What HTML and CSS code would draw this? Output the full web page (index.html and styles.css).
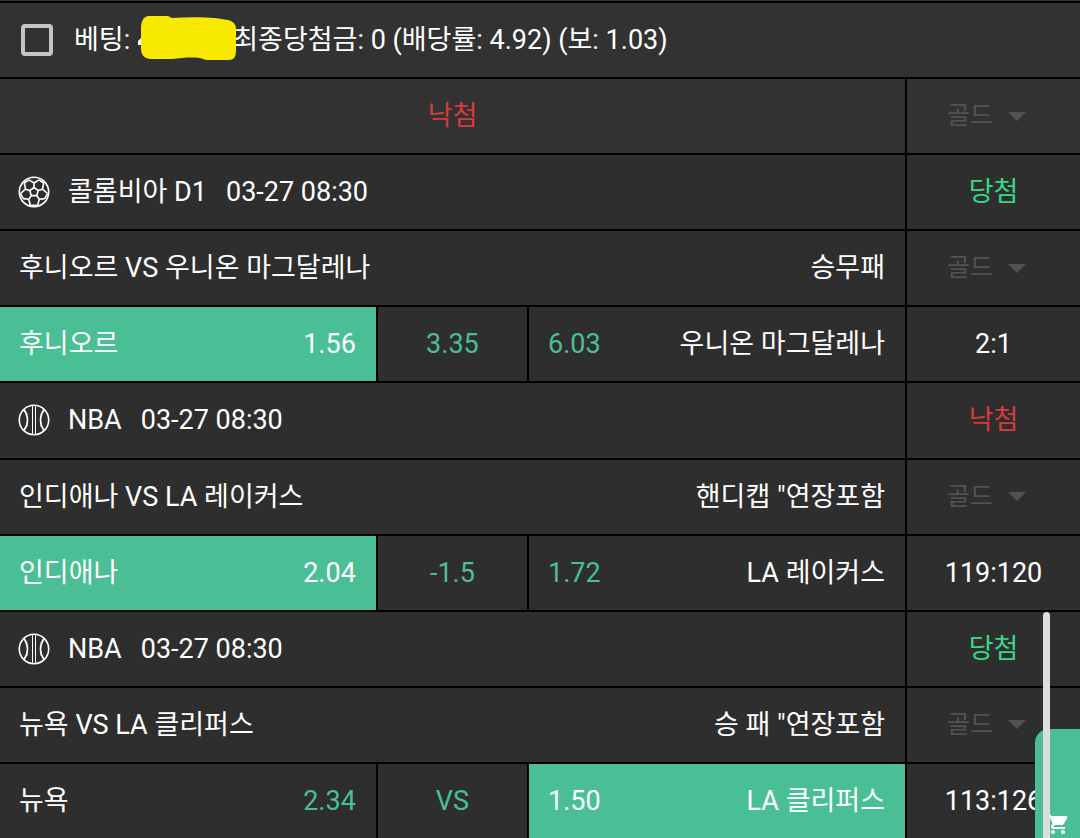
FILE: index.html
```html
<!DOCTYPE html>
<html lang="ko">
<head>
    <meta charset="UTF-8">
    <meta name="viewport" content="width=device-width, initial-scale=1.0">
    <title>베팅 내역</title>
    <link rel="stylesheet" href="styles.css">
</head>
<body>
    <!-- Shared icons -->
    <svg class="sprite" aria-hidden="true">
        <symbol id="icon-soccer" viewBox="0 0 32 32">
            <g fill="none" stroke="#fff" stroke-width="1.6" stroke-linejoin="round">
                <circle cx="16" cy="16" r="14.7"/>
                <path d="M16 11.5l4.3 3.1-1.6 5h-5.4l-1.6-5z"/>
                <path d="M16 11.5V7M20.3 14.6l4.2-1.4M18.7 19.6l2.6 3.6M13.3 19.6l-2.6 3.6M11.7 14.6l-4.2-1.4"/>
                <path d="M16 7l-5-3.200M16 7l5-3.200M24.500 13.200L25.700 7M24.500 13.200l5 4.300M21.300 23.200l5.500-.600M21.300 23.200l-1.800 6.500M10.700 23.200l1.800 6.500M10.700 23.200l-5.500-.600M7.500 13.200l-5 4.300M7.500 13.200L6.300 7"/>
                <path d="M11 3.800L6.300 7M21 3.800L25.700 7M29.500 17.500l-2.700 5.100M12.500 29.200h7M2.500 17.500l2.700 5.100"/>
            </g>
        </symbol>
        <symbol id="icon-ball" viewBox="0 0 32 32">
            <g fill="none" stroke="#fff" stroke-width="1.6">
                <circle cx="16" cy="16" r="14.7"/>
                <path d="M14.500 1.500v29M17.500 1.500v29" stroke-width="1"/>
                <path d="M6 5.500C8.500 9 9.500 12.500 9.500 16S8.500 23 6 26.500M26 5.500C23.500 9 22.500 12.500 22.500 16s1 7 3.500 10.500"/>
                <path d="M7.500 11l2-1M8 21l2 1M24.500 11l-2-1M24 21l-2 1" stroke-width="1"/>
            </g>
        </symbol>
        <symbol id="icon-arrow" viewBox="0 0 18 9">
            <path d="M0 0h18L9 9z" fill="#525252"/>
        </symbol>
    </svg>

    <table class="bets">
        <colgroup>
            <col class="col-home">
            <col class="col-draw">
            <col class="col-away">
            <col class="col-result">
        </colgroup>
        <tbody class="summary">
            <tr>
                <td colspan="4">
                    <div class="line">
                        <input type="checkbox" id="bet" class="check">
                        <label for="bet" class="bet-label">
                            <span>베팅:</span>
                            <svg class="marker" viewBox="0 0 100 46" aria-hidden="true">
                                <path d="M1 26l4-4v8H1z" fill="#fff"/>
                                <path d="M11 1h20l4 2c14-1 30-1 43 0l13 2q8 2 8 9v22q0 9-7 9H69l-6-2c-10-1-18 0-28 1H13q-9-1-9-10V11Q5 2 11 1z" fill="#f7ea00"/>
                            </svg>
                            <span>최종당첨금: 0 (배당률: 4.92) (보: 1.03)</span>
                        </label>
                    </div>
                </td>
            </tr>
            <tr>
                <td colspan="3" class="center lose">낙첨</td>
                <td>
                    <div class="gold">
                        <select aria-label="골드" disabled><option>골드</option></select>
                        <svg class="arrow"><use href="#icon-arrow"/></svg>
                    </div>
                </td>
            </tr>
        </tbody>

        <!-- Colombia D1 -->
        <tbody>
            <tr>
                <td colspan="3">
                    <div class="line league">
                        <svg class="sport"><use href="#icon-soccer"/></svg>
                        <span>콜롬비아 D1</span>
                        <span>03-27 08:30</span>
                    </div>
                </td>
                <td class="center win">당첨</td>
            </tr>
            <tr>
                <td colspan="3">
                    <div class="line between"><span>후니오르 VS 우니온 마그달레나</span><span>승무패</span></div>
                </td>
                <td>
                    <div class="gold">
                        <select aria-label="골드" disabled><option>골드</option></select>
                        <svg class="arrow"><use href="#icon-arrow"/></svg>
                    </div>
                </td>
            </tr>
            <tr>
                <td class="picked"><div class="line between"><span>후니오르</span><span class="odd">1.56</span></div></td>
                <td class="center odd">3.35</td>
                <td><div class="line between"><span class="odd">6.03</span><span>우니온 마그달레나</span></div></td>
                <td class="center">2:1</td>
            </tr>
        </tbody>

        <!-- NBA: Indiana - LA Lakers -->
        <tbody>
            <tr>
                <td colspan="3">
                    <div class="line league">
                        <svg class="sport"><use href="#icon-ball"/></svg>
                        <span>NBA</span>
                        <span>03-27 08:30</span>
                    </div>
                </td>
                <td class="center lose">낙첨</td>
            </tr>
            <tr>
                <td colspan="3">
                    <div class="line between"><span>인디애나 VS LA 레이커스</span><span>핸디캡 "연장포함</span></div>
                </td>
                <td>
                    <div class="gold">
                        <select aria-label="골드" disabled><option>골드</option></select>
                        <svg class="arrow"><use href="#icon-arrow"/></svg>
                    </div>
                </td>
            </tr>
            <tr>
                <td class="picked"><div class="line between"><span>인디애나</span><span class="odd">2.04</span></div></td>
                <td class="center odd">-1.5</td>
                <td><div class="line between"><span class="odd">1.72</span><span>LA 레이커스</span></div></td>
                <td class="center">119:120</td>
            </tr>
        </tbody>

        <!-- NBA: New York - LA Clippers -->
        <tbody>
            <tr>
                <td colspan="3">
                    <div class="line league">
                        <svg class="sport"><use href="#icon-ball"/></svg>
                        <span>NBA</span>
                        <span>03-27 08:30</span>
                    </div>
                </td>
                <td class="center win">당첨</td>
            </tr>
            <tr>
                <td colspan="3">
                    <div class="line between"><span>뉴욕 VS LA 클리퍼스</span><span>승 패 "연장포함</span></div>
                </td>
                <td>
                    <div class="gold">
                        <select aria-label="골드" disabled><option>골드</option></select>
                        <svg class="arrow"><use href="#icon-arrow"/></svg>
                    </div>
                </td>
            </tr>
            <tr>
                <td><div class="line between"><span>뉴욕</span><span class="odd">2.34</span></div></td>
                <td class="center odd">VS</td>
                <td class="picked"><div class="line between"><span class="odd">1.50</span><span>LA 클리퍼스</span></div></td>
                <td class="center">113:126</td>
            </tr>
        </tbody>
    </table>

    <button type="button" class="cart" aria-label="장바구니">
        <svg viewBox="0 0 24 24" width="24" height="24" fill="#fff">
            <path d="M7 18c-1.100 0-2 .900-2 2s.900 2 2 2 2-.900 2-2-.900-2-2-2zM1 2v2h2l3.600 7.600-1.350 2.450C4.500 15.400 5.500 17 7 17h12v-2H7.400l1.150-2h7.450c.750 0 1.400-.400 1.750-1.030L21.300 5.500C21.700 4.800 21.200 4 20.400 4H5.200l-.940-2zM17 18c-1.100 0-2 .900-2 2s.900 2 2 2 2-.900 2-2-.900-2-2-2z"/>
        </svg>
    </button>
    <div class="scroll-thumb"></div>
</body>
</html>
```
FILE: styles.css
```css
* {
    box-sizing: border-box;
}

body {
    margin: 0;
    padding-top: 1px;
    background-color: #2e2e2e;
    color: #fff;
    font-family: Roboto, "Noto Sans CJK KR", sans-serif;
    font-size: 27px;
    line-height: 32px;
}

.sprite {
    position: absolute;
    width: 0;
    height: 0;
}

/* Bet table */
.bets {
    width: 100%;
    height: calc(100vh - 1px);
    table-layout: fixed;
    border-collapse: separate;
    border-spacing: 0;
}

.col-home {
    width: 34.8%;
}

.col-draw {
    width: 14%;
}

.col-away {
    width: 35%;
}

.bets td {
    height: 76px;
    padding: 0 20px 0 19px;
    border-top: 2px solid #000;
    border-left: 2px solid #000;
    white-space: nowrap;
}

.bets td:first-child {
    border-left: none;
}

.summary td {
    background-color: #323232;
}

.bets .center {
    padding: 0;
    text-align: center;
}

.line {
    display: flex;
    align-items: center;
}

.between {
    justify-content: space-between;
}

.league {
    gap: 19px;
}

.sport {
    width: 32px;
    height: 32px;
    margin: 0 -1px;
}

/* Colors */
.win {
    color: #36d986;
}

.lose {
    color: #d93a3a;
}

.odd {
    color: #4abf95;
}

.bets .picked {
    background-color: #4abf95;
}

.picked .odd {
    color: #fff;
}

/* Summary row */
.check {
    appearance: none;
    width: 32px;
    height: 32px;
    margin: 0 21px 0 2px;
    border: 4px solid #c4c4c4;
    border-radius: 4px;
}

.bet-label {
    display: flex;
    align-items: center;
}

.marker {
    width: 100px;
    height: 46px;
    margin: -4px -4px 0 7px;
    z-index: 1;
}

/* Disabled gold select */
.gold {
    display: flex;
    align-items: center;
    gap: 14px;
    padding-left: 21px;
}

.gold select {
    appearance: none;
    padding: 0;
    border: none;
    background: none;
    color: #525252;
    font: inherit;
    font-size: 25px;
    opacity: 1;
}

.arrow {
    width: 18px;
    height: 9px;
}

/* Floating cart and scroll thumb */
.cart {
    position: fixed;
    right: 0;
    bottom: 0;
    display: flex;
    align-items: flex-end;
    width: 45px;
    height: 109px;
    padding: 0 0 2px 11px;
    border: none;
    border-radius: 14px 0 0 0;
    background-color: #4abf95;
}

.scroll-thumb {
    position: fixed;
    right: 30px;
    bottom: 0;
    width: 7px;
    height: 226px;
    border-radius: 4px 4px 0 0;
    background-color: #dedede;
}
```
